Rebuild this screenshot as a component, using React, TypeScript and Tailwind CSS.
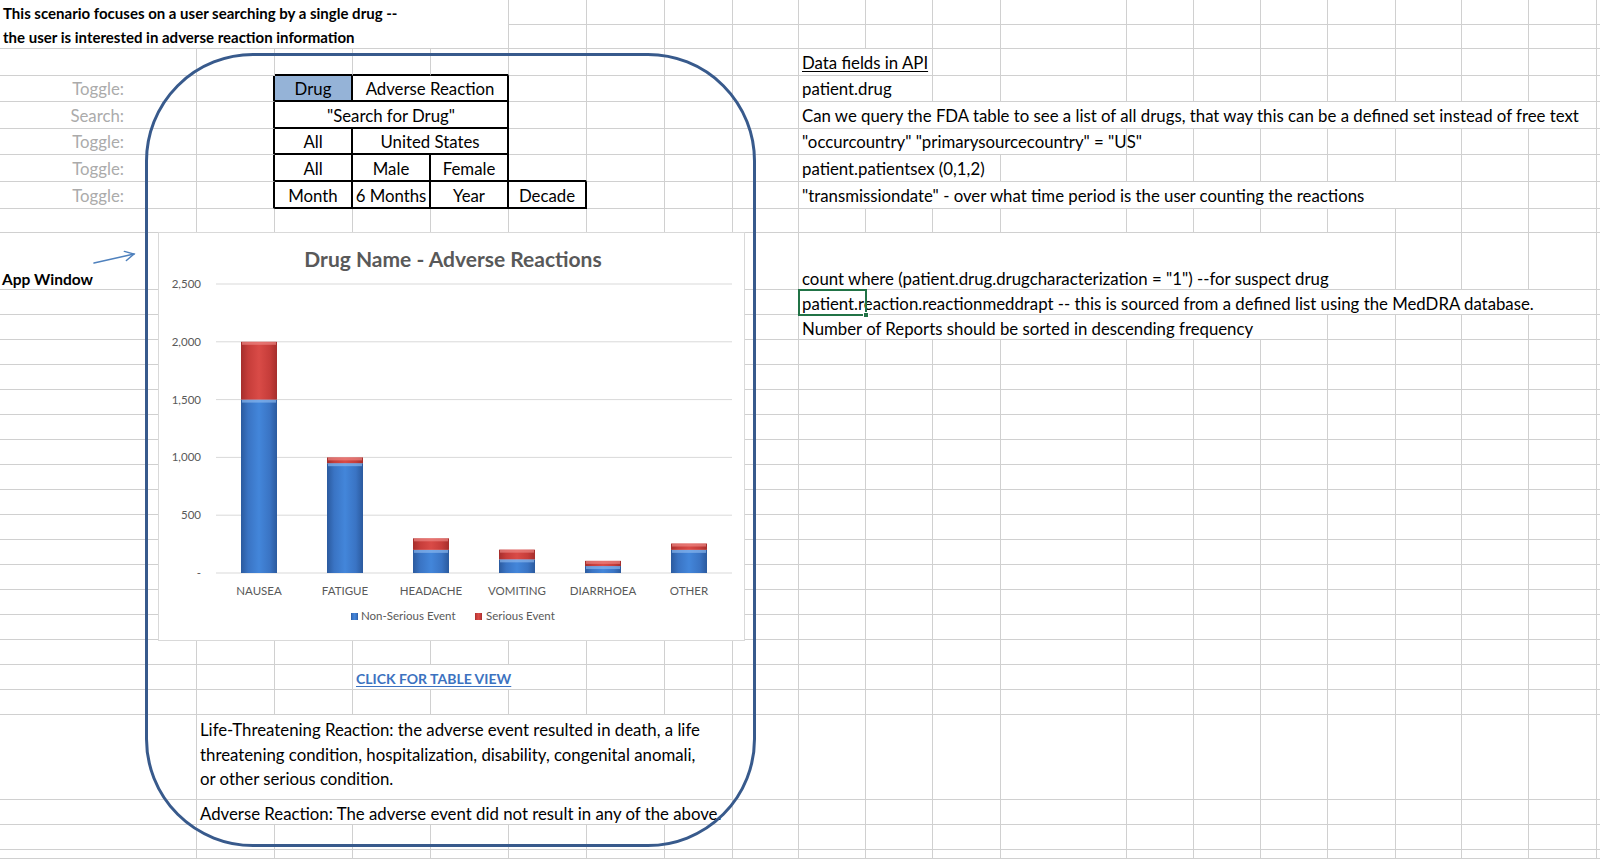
import React from 'react';

type Cell = {
  span?: number;
  text?: React.ReactNode;
  cls?: string;
  pb?: string;
};

const SPAN: Record<number, string> = {
  1: 'col-span-1',
  2: 'col-span-2',
  3: 'col-span-3',
  4: 'col-span-4',
  5: 'col-span-5',
  6: 'col-span-6',
  7: 'col-span-7',
  8: 'col-span-8',
  9: 'col-span-9',
  10: 'col-span-10',
  11: 'col-span-11',
};

const blank = (n: number, cls = ''): Cell[] => Array.from({ length: n }, () => ({ cls }));

const label = (t: string): Cell => ({
  text: t,
  cls: 'justify-end pr-[72px] text-[#ababab]',
});
const edge: Cell = { cls: 'border-r-2 border-r-black' };
const tbl = (t: string, span = 1, extra = ''): Cell => ({
  text: t,
  span,
  pb: 'pb-[1px]',
  cls: `justify-center border-r-2 border-b-2 border-r-black border-b-black ${extra}`,
});
const topEdge = 'border-b-2 border-b-black';

const rows: Cell[][] = [
  [
    {
      span: 5,
      pb: 'pb-0',
      cls: 'row-span-2 items-start pt-[1px] font-bold text-[15px] leading-[24px] flex-col !justify-start',
      text: (
        <>
          <span>This scenario focuses on a user searching by a single drug --</span>
          <span>the user is interested in adverse reaction information</span>
        </>
      ),
    },
    ...blank(16),
  ],
  blank(16),
  [
    ...blank(2),
    ...blank(3, topEdge),
    ...blank(4),
    { span: 2, text: <span className="underline underline-offset-2">Data fields in API</span> },
    ...blank(10),
  ],
  [
    label('Toggle:'),
    edge,
    tbl('Drug', 1, 'bg-[#95b3d7]'),
    tbl('Adverse Reaction', 2),
    ...blank(4),
    { span: 2, text: 'patient.drug' },
    ...blank(10),
  ],
  [
    label('Search:'),
    edge,
    tbl('"Search for Drug"', 3),
    ...blank(4),
    {
      span: 11,
      text: 'Can we query the FDA table to see a list of all drugs, that way this can be a defined set instead of free text',
    },
    ...blank(1),
  ],
  [
    label('Toggle:'),
    edge,
    tbl('All'),
    tbl('United States', 2),
    ...blank(4),
    { span: 4, text: '"occurcountry" "primarysourcecountry" = "US"' },
    ...blank(8),
  ],
  [
    label('Toggle:'),
    edge,
    tbl('All'),
    tbl('Male'),
    tbl('Female'),
    { cls: topEdge },
    ...blank(3),
    { span: 3, text: 'patient.patientsex (0,1,2)' },
    ...blank(9),
  ],
  [
    label('Toggle:'),
    edge,
    tbl('Month'),
    tbl('6 Months'),
    tbl('Year'),
    tbl('Decade'),
    ...blank(3),
    { span: 9, text: '"transmissiondate" - over what time period is the user counting the reactions' },
    ...blank(3),
  ],
  blank(21),
  [
    { text: 'App Window', cls: 'font-bold text-[15.5px] pl-[2px]' },
    ...blank(8),
    { span: 8, text: 'count where (patient.drug.drugcharacterization = "1") --for suspect drug' },
    ...blank(4),
  ],
  [
    ...blank(9),
    {
      span: 11,
      text: 'patient.reaction.reactionmeddrapt -- this is sourced from a defined list using the MedDRA database.',
    },
    ...blank(1),
  ],
  [...blank(9), { span: 7, text: 'Number of Reports should be sorted in descending frequency' }, ...blank(5)],
  ...Array.from({ length: 13 }, () => blank(21)),
  [
    ...blank(3),
    {
      span: 3,
      text: 'CLICK FOR TABLE VIEW',
      cls: 'font-bold text-[14px] text-[#3c72c0] underline underline-offset-2',
    },
    ...blank(15),
  ],
  blank(21),
  [
    ...blank(1),
    {
      span: 7,
      pb: 'pb-[7px]',
      cls: '!whitespace-normal leading-[24.6px] pr-[24px]',
      text: 'Life-Threatening Reaction: the adverse event resulted in death, a life threatening condition, hospitalization, disability, congenital anomali, or other serious condition.',
    },
    ...blank(13),
  ],
  [
    ...blank(1),
    { span: 7, text: 'Adverse Reaction: The adverse event did not result in any of the above.' },
    ...blank(13),
  ],
  blank(21),
  blank(21),
];

const data = [
  { name: 'NAUSEA', a: 1500, b: 500 },
  { name: 'FATIGUE', a: 950, b: 50 },
  { name: 'HEADACHE', a: 200, b: 100 },
  { name: 'VOMITING', a: 118, b: 84 },
  { name: 'DIARRHOEA', a: 60, b: 45 },
  { name: 'OTHER', a: 200, b: 55 },
];

function Chart() {
  const y0 = 340;
  const k = 57.8 / 500;
  const ticks = [0, 500, 1000, 1500, 2000, 2500];
  return (
    <svg width="585" height="407" viewBox="0 0 585 407" fontFamily="Lato, sans-serif">
      <defs>
        <linearGradient id="blue" x1="0" x2="1" y1="0" y2="0">
          <stop offset="0" stopColor="#2b5a9e" />
          <stop offset="0.2" stopColor="#3a74c4" />
          <stop offset="0.5" stopColor="#4386da" />
          <stop offset="0.8" stopColor="#3a74c4" />
          <stop offset="1" stopColor="#2b5a9e" />
        </linearGradient>
        <linearGradient id="red" x1="0" x2="1" y1="0" y2="0">
          <stop offset="0" stopColor="#a52e2c" />
          <stop offset="0.2" stopColor="#c63d3a" />
          <stop offset="0.5" stopColor="#d94b47" />
          <stop offset="0.8" stopColor="#c63d3a" />
          <stop offset="1" stopColor="#a52e2c" />
        </linearGradient>
      </defs>
      <text x="294" y="34" textAnchor="middle" fontSize="21" fontWeight="700" fill="#595959">
        Drug Name - Adverse Reactions
      </text>
      {ticks.map((t) => (
        <g key={t}>
          <line x1="57" x2="573" y1={y0 - t * k} y2={y0 - t * k} stroke="#d9d9d9" strokeWidth="1" />
          <text x="42" y={y0 - t * k + 4} textAnchor="end" fontSize="11.5" fill="#595959">
            {t === 0 ? '-' : t.toLocaleString('en-US')}
          </text>
        </g>
      ))}
      {data.map((d, i) => {
        const x = 57 + i * 86 + 25;
        const ha = d.a * k;
        const hb = d.b * k;
        return (
          <g key={d.name}>
            <rect x={x} y={y0 - ha} width="36" height={ha} fill="url(#blue)" />
            <rect x={x + 1} y={y0 - ha} width="34" height={Math.min(3, ha)} fill="#8dbaf0" opacity="0.65" />
            <rect x={x} y={y0 - ha - hb} width="36" height={hb} fill="url(#red)" />
            <rect x={x + 1} y={y0 - ha - hb} width="34" height={Math.min(3, hb)} fill="#ee8a87" opacity="0.65" />
            <text x={x + 18} y="362" textAnchor="middle" fontSize="11.5" fill="#595959">
              {d.name}
            </text>
          </g>
        );
      })}
      <rect x="192" y="380" width="7" height="7" fill="url(#blue)" />
      <text x="202" y="387" fontSize="11.5" fill="#595959">
        Non-Serious Event
      </text>
      <rect x="316" y="380" width="7" height="7" fill="url(#red)" />
      <text x="327" y="387" fontSize="11.5" fill="#595959">
        Serious Event
      </text>
    </svg>
  );
}

export default function App() {
  return (
    <div className="relative h-[859px] w-[1600px] overflow-hidden bg-white font-['Lato','Open_Sans',sans-serif] text-[16.8px] text-black">
      <div className="grid grid-cols-[197px_78px_78px_78px_78px_78px_78px_68px_66px_67px_67px_68px_126px_67px_67px_67px_68px_66px_67px_68px_3px] grid-rows-[25px_24px_27px_26px_27px_26px_27px_27px_24px_57px_repeat(17,25px)_85px_25px_25px_9px]">
        {rows.flatMap((row, r) =>
          row.map((c, i) => (
            <div
              key={`${r}-${i}`}
              className={`${SPAN[c.span ?? 1]} ${c.pb ?? (r < 9 ? 'pb-[2px]' : 'pb-0')} flex items-end whitespace-nowrap border-r border-b border-[#d0d0d0] px-[3px] leading-[20px] ${c.cls ?? ''}`}
            >
              {c.text}
            </div>
          )),
        )}
      </div>

      {/* chart object */}
      <div className="absolute left-[158px] top-[232px] h-[409px] w-[587px] border border-[#d9d9d9] bg-white">
        <Chart />
      </div>

      {/* app window shape */}
      <div className="pointer-events-none absolute left-[145px] top-[53px] h-[794px] w-[611px] rounded-[108px] border-[3px] border-[#385a8c]" />

      {/* arrow */}
      <svg className="absolute left-[90px] top-[248px]" width="50" height="20" viewBox="0 0 50 20">
        <g stroke="#4f81bd" strokeWidth="1.5" fill="none" strokeLinecap="round">
          <line x1="4" y1="15" x2="44" y2="6" />
          <polyline points="34.4,3.4 44,6 36.4,12.5" />
        </g>
      </svg>

      {/* selected cell */}
      <div className="pointer-events-none absolute left-[798px] top-[289px] h-[27px] w-[69px] border-2 border-[#217346]">
        <div className="absolute -bottom-[4px] -right-[4px] h-[6px] w-[6px] border border-white bg-[#217346]" />
      </div>
    </div>
  );
}
